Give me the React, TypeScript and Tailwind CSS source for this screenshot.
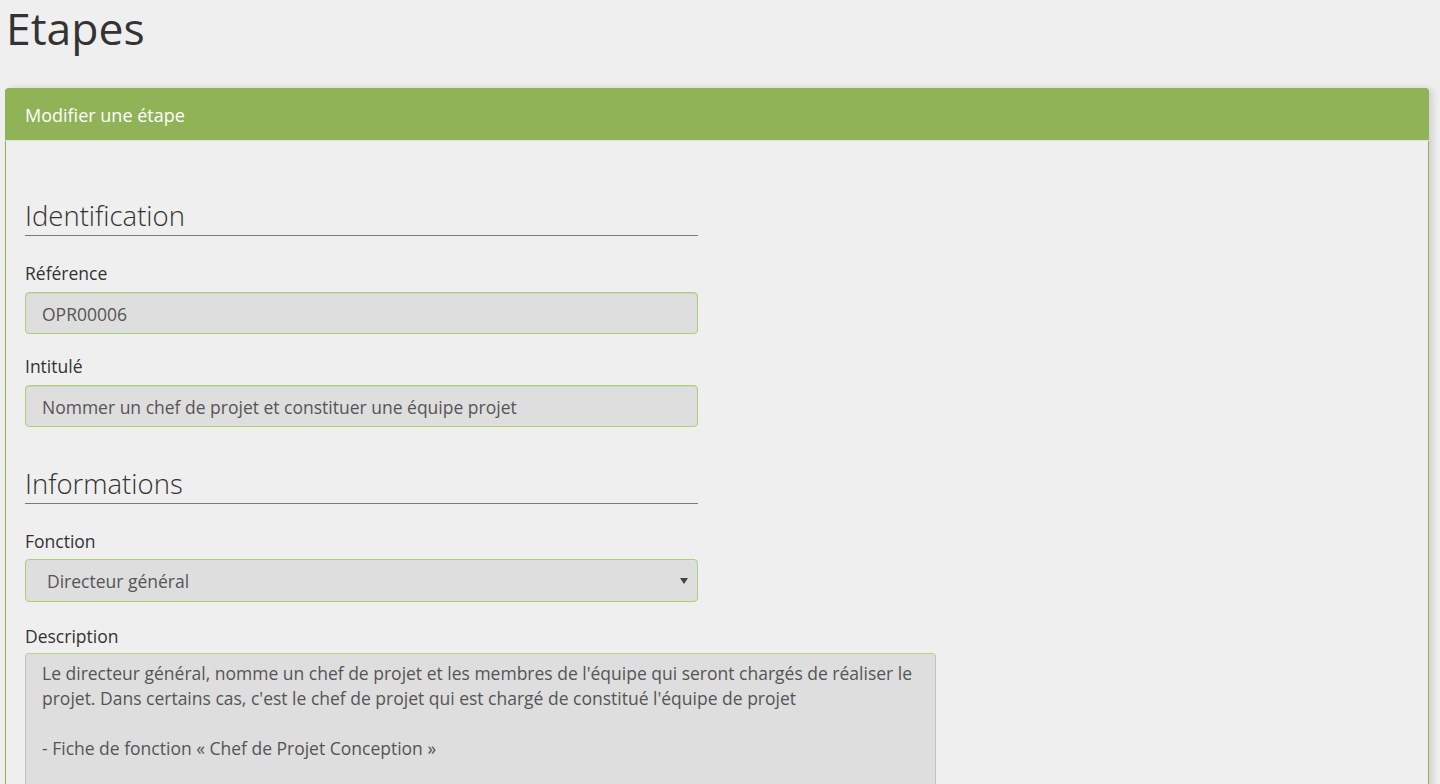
import React from "react";

const font = { fontFamily: '"Open Sans", "Noto Sans", sans-serif' };

function Label({ children }: { children: React.ReactNode }) {
  return <div className="text-[17.5px] leading-[22px] text-[#333] mb-[8px]">{children}</div>;
}

function Input({ value }: { value: string }) {
  return (
    <div className="h-[42px] rounded-[4px] border border-[#a9d270] bg-[#dedede] pl-[16px] pt-[2px] flex items-center text-[17.5px] text-[#555] shadow-[inset_0_1px_1px_rgba(0,0,0,0.06)]">
      {value}
    </div>
  );
}

function SectionTitle({ children }: { children: React.ReactNode }) {
  return (
    <div className="text-[27.5px] leading-[36px] font-light text-[#333] pb-[1px] border-b border-[#7a7a7a]">
      {children}
    </div>
  );
}

export default function App() {
  return (
    <div className="h-[784px] bg-[#efefef] overflow-hidden" style={font}>
      <h1 className="text-[44.5px] leading-[60px] -mt-[2px] mb-0 text-[#333] pl-[6px] font-normal">Etapes</h1>
      <div className="ml-[5px] mr-[11px] mt-[30px] rounded-t-[5px] border-x border-[#8fb356] shadow-[4px_0_6px_rgba(0,0,0,0.12)]">
        <div className="bg-[#8fb356] h-[53px] pt-[15px] px-[20px] text-[18px] leading-[24px] text-white rounded-t-[4px] border-b border-[#dde5d3] -mx-px">
          Modifier une étape
        </div>
        <div className="px-[19px] pt-[57px] pb-[40px] bg-[#efefef]">
          <div className="w-[673px]">
            <SectionTitle>Identification</SectionTitle>
            <div className="mt-[26px]">
              <Label>Référence</Label>
              <Input value="OPR00006" />
            </div>
            <div className="mt-[21px]">
              <Label>Intitulé</Label>
              <Input value="Nommer un chef de projet et constituer une équipe projet" />
            </div>
            <div className="mt-[39px]">
              <SectionTitle>Informations</SectionTitle>
            </div>
            <div className="mt-[26px]">
              <Label>Fonction</Label>
              <div className="h-[43px] -mt-[1px] rounded-[4px] border border-[#a9d270] bg-[#dedede] pl-[21px] pr-[8px] pt-[1px] flex items-center justify-between text-[17.5px] text-[#555]">
                <span>Directeur général</span>
                <svg width="8" height="6" viewBox="0 0 8 6" className="mr-[1px]">
                  <path d="M0 0 H8 L4 6 Z" fill="#444" />
                </svg>
              </div>
            </div>
            <div className="mt-[23px]">
              <Label>Description</Label>
            </div>
          </div>
          <div className="w-[911px] h-[220px] rounded-[4px] border border-[#bfc6b5] border-t-[#b5d58a] bg-[#dedede] pt-[7px] pl-[16px] text-[17.5px] leading-[25px] text-[#555] -mt-[2px]">
            <div className="whitespace-nowrap">
              Le directeur général, nomme un chef de projet et les membres de l'équipe qui seront chargés de réaliser le
            </div>
            <div className="whitespace-nowrap">
              projet. Dans certains cas, c'est le chef de projet qui est chargé de constitué l'équipe de projet
            </div>
            <div className="h-[25px]" />
            <div className="whitespace-nowrap">- Fiche de fonction « Chef de Projet Conception »</div>
          </div>
        </div>
      </div>
    </div>
  );
}
